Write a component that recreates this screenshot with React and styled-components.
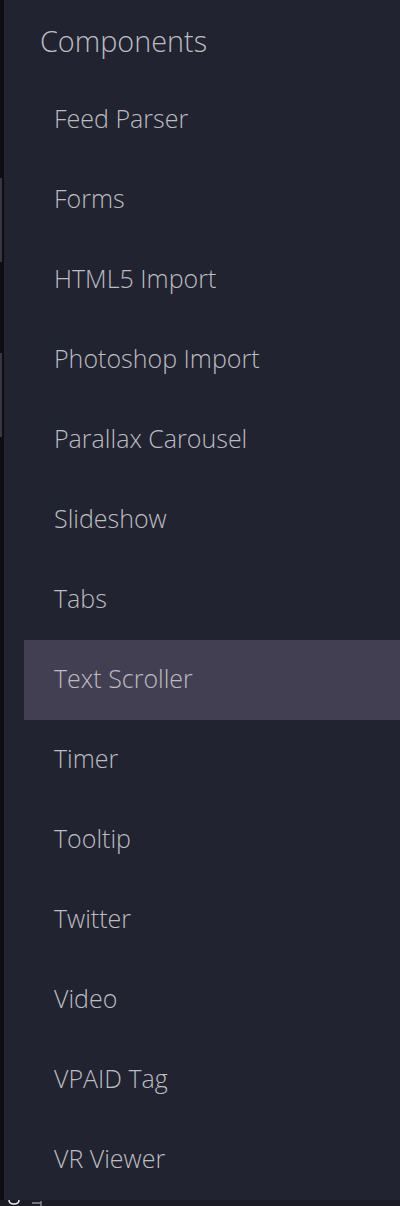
import styled, { createGlobalStyle } from 'styled-components';

const GlobalStyle = createGlobalStyle`
  html, body {
    margin: 0;
    padding: 0;
    background: #101017;
  }
  body {
    font-family: "Open Sans", "Noto Sans", sans-serif;
  }
`;

const items = [
  'Feed Parser',
  'Forms',
  'HTML5 Import',
  'Photoshop Import',
  'Parallax Carousel',
  'Slideshow',
  'Tabs',
  'Text Scroller',
  'Timer',
  'Tooltip',
  'Twitter',
  'Video',
  'VPAID Tag',
  'VR Viewer',
];

const Page = styled.div`
  width: 400px;
  height: 1206px;
  overflow: hidden;
  display: grid;
  grid-template-columns: 4px 1fr;
  grid-template-rows: 1200px 6px;
`;

const Gutter = styled.div`
  background: #0d0d12;
  display: flex;
  flex-direction: column;
  padding-top: 178px;
  gap: 91px;
`;

const Mark = styled.div`
  width: 2px;
  height: 84px;
  background: #3a3446;
`;

const Panel = styled.nav`
  background: #222330;
  display: flex;
  flex-direction: column;
`;

const Heading = styled.div`
  height: 80px;
  display: flex;
  align-items: center;
  padding-left: 36px;
  font-size: 28.8px;
  font-weight: 300;
  color: #bdbdc3;
`;

const Item = styled.div`
  height: 80px;
  margin-left: 20px;
  display: flex;
  align-items: center;
  padding: 0 0 4px 30px;
  box-sizing: border-box;
  font-size: 25px;
  font-weight: 300;
  color: #bcbcc1;
  background: ${(p) => (p.$active ? '#433f52' : 'transparent')};
`;

const Footer = styled.div`
  grid-column: 1 / span 2;
  background: #1b1c26;
  display: flex;
  align-items: flex-start;
  gap: 8px;
  padding-left: 7px;
`;

export default function App() {
  return (
    <>
      <GlobalStyle />
      <Page>
        <Gutter>
          <Mark />
          <Mark />
        </Gutter>
        <Panel>
          <Heading>Components</Heading>
          {items.map((label) => (
            <Item key={label} $active={label === 'Text Scroller'}>
              {label}
            </Item>
          ))}
        </Panel>
        <Footer>
          <svg width="16" height="6" viewBox="0 0 16 6">
            <path d="M2 0 Q2 4 7 4 Q12 4 12 0" fill="none" stroke="#e8e8ec" strokeWidth="1.6" />
          </svg>
          <svg width="12" height="6" viewBox="0 0 12 6">
            <path d="M1 3 H10 M10 1 V6" fill="none" stroke="#8a8a92" strokeWidth="1.4" />
          </svg>
        </Footer>
      </Page>
    </>
  );
}
